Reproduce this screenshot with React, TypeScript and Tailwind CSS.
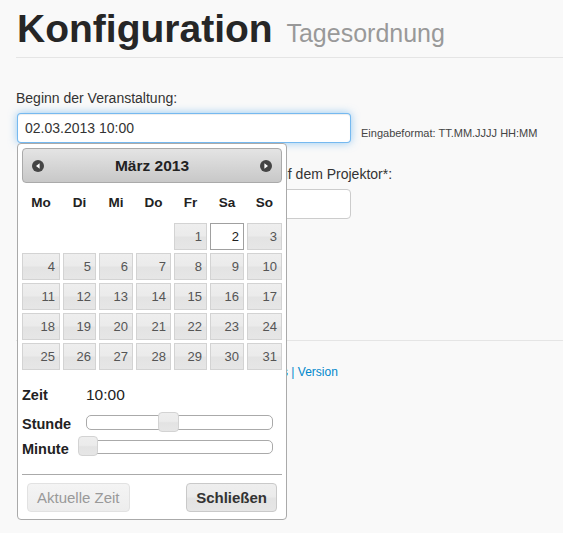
const weekdays = ['Mo', 'Di', 'Mi', 'Do', 'Fr', 'Sa', 'So']
const days = Array.from({ length: 31 }, (_, i) => i + 1)

const NavArrow = ({ dir }: { dir: 'prev' | 'next' }) => (
  <svg width="12" height="12" viewBox="0 0 12 12">
    <circle cx="6" cy="6" r="6" fill="#454545" />
    <path d={dir === 'prev' ? 'M7.6 3.2 L4 6 L7.6 8.8 Z' : 'M4.4 3.2 L8 6 L4.4 8.8 Z'} fill="#fff" />
  </svg>
)

const DatePicker = () => (
  <div className="absolute left-[17px] top-[143px] w-[270px] rounded-[4px] border border-[#aaa] bg-white p-[4px] pb-[7px]">
    <div className="flex h-[35px] items-center justify-between rounded-[4px] border border-[#aaa] bg-[linear-gradient(to_bottom,#e4e4e4,#c8c8c8)] px-[9px]">
      <NavArrow dir="prev" />
      <span className="text-[15.5px] font-bold text-[#222]">März 2013</span>
      <NavArrow dir="next" />
    </div>

    <div className="grid h-[40px] grid-cols-[38px_33px_34px_35px_33px_34px_35px] items-center gap-x-[3px] text-center text-[13.5px] font-bold text-[#222]">
      {weekdays.map((d) => (
        <span key={d}>{d}</span>
      ))}
    </div>

    <div className="grid auto-rows-[27px] grid-cols-[38px_33px_34px_35px_33px_34px_35px] gap-[3px] text-[13px]">
      {[0, 1, 2, 3].map((i) => (
        <span key={'e' + i} />
      ))}
      {days.map((d) =>
        d === 2 ? (
          <span key={d} className="border border-[#a0a0a0] bg-white pr-[4px] text-right leading-[25px] text-[#212121]">
            {d}
          </span>
        ) : (
          <span
            key={d}
            className="border border-[#d3d3d3] bg-[linear-gradient(to_bottom,#eeeeee_0%,#ebebeb_46%,#e3e3e3_54%,#e6e6e6_100%)] pr-[4px] text-right leading-[25px] text-[#555]"
          >
            {d}
          </span>
        )
      )}
    </div>

    <div className="mt-[15px] flex h-[20px] items-center text-[#222]">
      <span className="w-[64px] text-[14.5px] font-bold">Zeit</span>
      <span className="text-[15.5px]">10:00</span>
    </div>
    <div className="mt-[7px] flex h-[25px]">
      <span className="w-[64px] text-[14.5px] font-bold leading-[25px] text-[#222]">Stunde</span>
      <div className="relative mt-[3px] h-[15px] w-[187px] rounded-[5px] border border-[#aaa] bg-white">
        <span className="absolute left-[71px] top-[-4px] h-[20px] w-[21px] rounded-[4px] border border-[#d3d3d3] bg-[linear-gradient(to_bottom,#eeeeee_0%,#ebebeb_46%,#e3e3e3_54%,#e6e6e6_100%)]" />
      </div>
    </div>
    <div className="flex h-[25px]">
      <span className="w-[64px] text-[14.5px] font-bold leading-[25px] text-[#222]">Minute</span>
      <div className="relative mt-[3px] h-[14px] w-[187px] rounded-[5px] border border-[#aaa] bg-white">
        <span className="absolute left-[-9px] top-[-5px] h-[20px] w-[20px] rounded-[4px] border border-[#d3d3d3] bg-[linear-gradient(to_bottom,#eeeeee_0%,#ebebeb_46%,#e3e3e3_54%,#e6e6e6_100%)]" />
      </div>
    </div>

    <div className="mt-[12px] border-t border-[#aaa]" />
    <div className="mt-[8px] flex justify-between px-[5px] text-[15px]">
      <button className="h-[29px] rounded-[4px] border border-[#e2e2e2] bg-[linear-gradient(to_bottom,#f4f4f4,#ededed)] px-[9px] text-[#999]">
        Aktuelle Zeit
      </button>
      <button className="h-[29px] rounded-[4px] border border-[#c9c9c9] bg-[linear-gradient(to_bottom,#eeeeee_0%,#ebebeb_46%,#e3e3e3_54%,#e6e6e6_100%)] px-[9px] font-bold text-[#333]">
        Schließen
      </button>
    </div>
  </div>
)

export default function App() {
  return (
    <div className="relative min-h-[533px] overflow-hidden bg-[#f9f9f9] pl-4 font-['Liberation_Sans',Arial,sans-serif] text-[14px] leading-5 text-[#333]">
      <div className="border-b border-[#e5e5e5] pb-2 pt-[9px]">
        <h1 className="h-10 whitespace-nowrap pl-px text-[39px] font-bold leading-10 text-[#262626]">
          Konfiguration <small className="ml-[3px] text-[25px] font-normal leading-none text-[#999]">Tagesordnung</small>
        </h1>
      </div>

      <div className="pt-[30px]">
        <label className="mb-[5px] block">Beginn der Veranstaltung:</label>
        <div className="flex">
          <div className="ml-px h-[30px] w-[334px] rounded-[4px] border border-[rgba(82,168,236,0.8)] bg-white px-[7px] leading-[28px] shadow-[inset_0_1px_1px_rgba(0,0,0,0.075),0_0_8px_rgba(82,168,236,0.6)]">
            02.03.2013 10:00
          </div>
          <span className="mb-[3px] ml-[10px] self-end text-[11px] leading-[14px] text-[#444]">
            Eingabeformat: TT.MM.JJJJ HH:MM
          </span>
        </div>

        <label className="mb-[5px] mt-[21px] block whitespace-nowrap pl-[2px]">
          Anzeigezeit eines Tagesordnungspunkts auf dem Projektor*:
        </label>
        <div className="ml-[2px] h-[30px] w-[333px] rounded-[4px] border border-[#ccc] bg-white px-[7px] leading-[28px]">
          30
        </div>
      </div>

      <div className="mt-[121px] flex border-t border-[#e5e5e5] pt-[22px] text-[12px] leading-[18px] text-[#0088cc]">
        <span className="w-[272px] overflow-hidden whitespace-nowrap text-right">Impressum | Hilfe | Credits</span>
        <span className="whitespace-pre"> | Version</span>
      </div>

      <DatePicker />
    </div>
  )
}
